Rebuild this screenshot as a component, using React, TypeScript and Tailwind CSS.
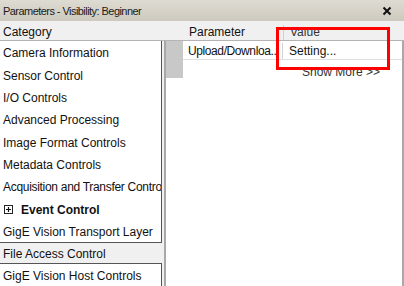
const CATEGORIES = [
  "Camera Information",
  "Sensor Control",
  "I/O Controls",
  "Advanced Processing",
  "Image Format Controls",
  "Metadata Controls",
];

function Row({ children }: { children: React.ReactNode }) {
  return (
    <div className="flex h-[22.33px] items-center overflow-hidden whitespace-nowrap pl-[3px] pt-[3px]">
      {children}
    </div>
  );
}

export default function App() {
  return (
    <div
      className="flex h-[286px] w-[404px] flex-col overflow-hidden bg-[#f0f0f0] text-[12px] text-[#111]"
      style={{ fontFamily: "'Liberation Sans', Arial, sans-serif" }}
    >
      {/* title bar */}
      <div className="flex h-[21px] items-center justify-between bg-gradient-to-b from-[#dedbd2] to-[#cdc9bd] pl-[3px] pr-[12px] pt-[2px] text-[11px] text-[#1a1a1a]">
        <span className="tracking-[-0.55px]">Parameters - Visibility: Beginner</span>
        <svg width="10" height="10" viewBox="0 0 10 10">
          <path d="M1.5 1.5 L8.5 8.5 M8.5 1.5 L1.5 8.5" stroke="#111" strokeWidth="2" />
        </svg>
      </div>

      {/* header row */}
      <div className="flex h-[20px] items-center border-b border-[#b4b4b4] bg-[#f0f0f0] pt-[4px]">
        <div className="w-[189px] pl-[3px]">Category</div>
        <div className="w-[94px]">Parameter</div>
        <div className="h-full w-px bg-[#d0d0d0]" />
        <div className="pl-[6px] text-[#333]">Value</div>
      </div>

      <div className="flex flex-1">
        {/* category list */}
        <div className="flex w-[162px] flex-col">
          <div className="border-b border-r border-[#555] bg-white">
            {CATEGORIES.map((c) => (
              <Row key={c}>{c}</Row>
            ))}
            <Row>
              <span className="tracking-[-0.3px]">Acquisition and Transfer Control</span>
            </Row>
            <Row>
              <span className="ml-[1px] mr-[8px] flex h-[9px] w-[9px] items-center justify-center border border-[#222]">
                <svg width="7" height="7" viewBox="0 0 7 7">
                  <path d="M1 3.5 H6 M3.5 1 V6" stroke="#111" strokeWidth="1.2" />
                </svg>
              </span>
              <span className="font-bold">Event Control</span>
            </Row>
            <Row>GigE Vision Transport Layer</Row>
          </div>
          <div className="flex h-[20px] items-center pl-[3px] pt-[3px]">File Access Control</div>
          <div className="flex-1 border-r border-t border-[#555] bg-white">
            <Row>GigE Vision Host Controls</Row>
          </div>
        </div>

        {/* parameter grid */}
        <div className="ml-[2px] flex flex-1 border-l-2 border-r-2 border-[#a8a8a8] bg-white">
          <div className="relative flex-1">
            <div className="flex">
              <div className="h-[37px] w-[17px] bg-[#c8c8c8]" />
              <div className="flex-1">
                <div className="flex h-[19px] items-center border-b border-[#e0e0e0] pt-[2px]">
                  <div className="w-[99px] overflow-hidden whitespace-nowrap pl-[5px] tracking-[-0.4px]">
                    Upload/Downloa...
                  </div>
                  <div className="h-full w-px bg-[#d0d0d0]" />
                  <div className="pl-[6px]">Setting...</div>
                </div>
                <div className="flex h-[18px] items-center justify-end pr-[22px] pt-[6px] text-[#333]">
                  Show More &gt;&gt;
                </div>
              </div>
            </div>
            <div className="absolute left-[110px] top-[-14px] h-[43px] w-[114px] border-[3px] border-[#ff0000]" />
          </div>
        </div>
      </div>
    </div>
  );
}
